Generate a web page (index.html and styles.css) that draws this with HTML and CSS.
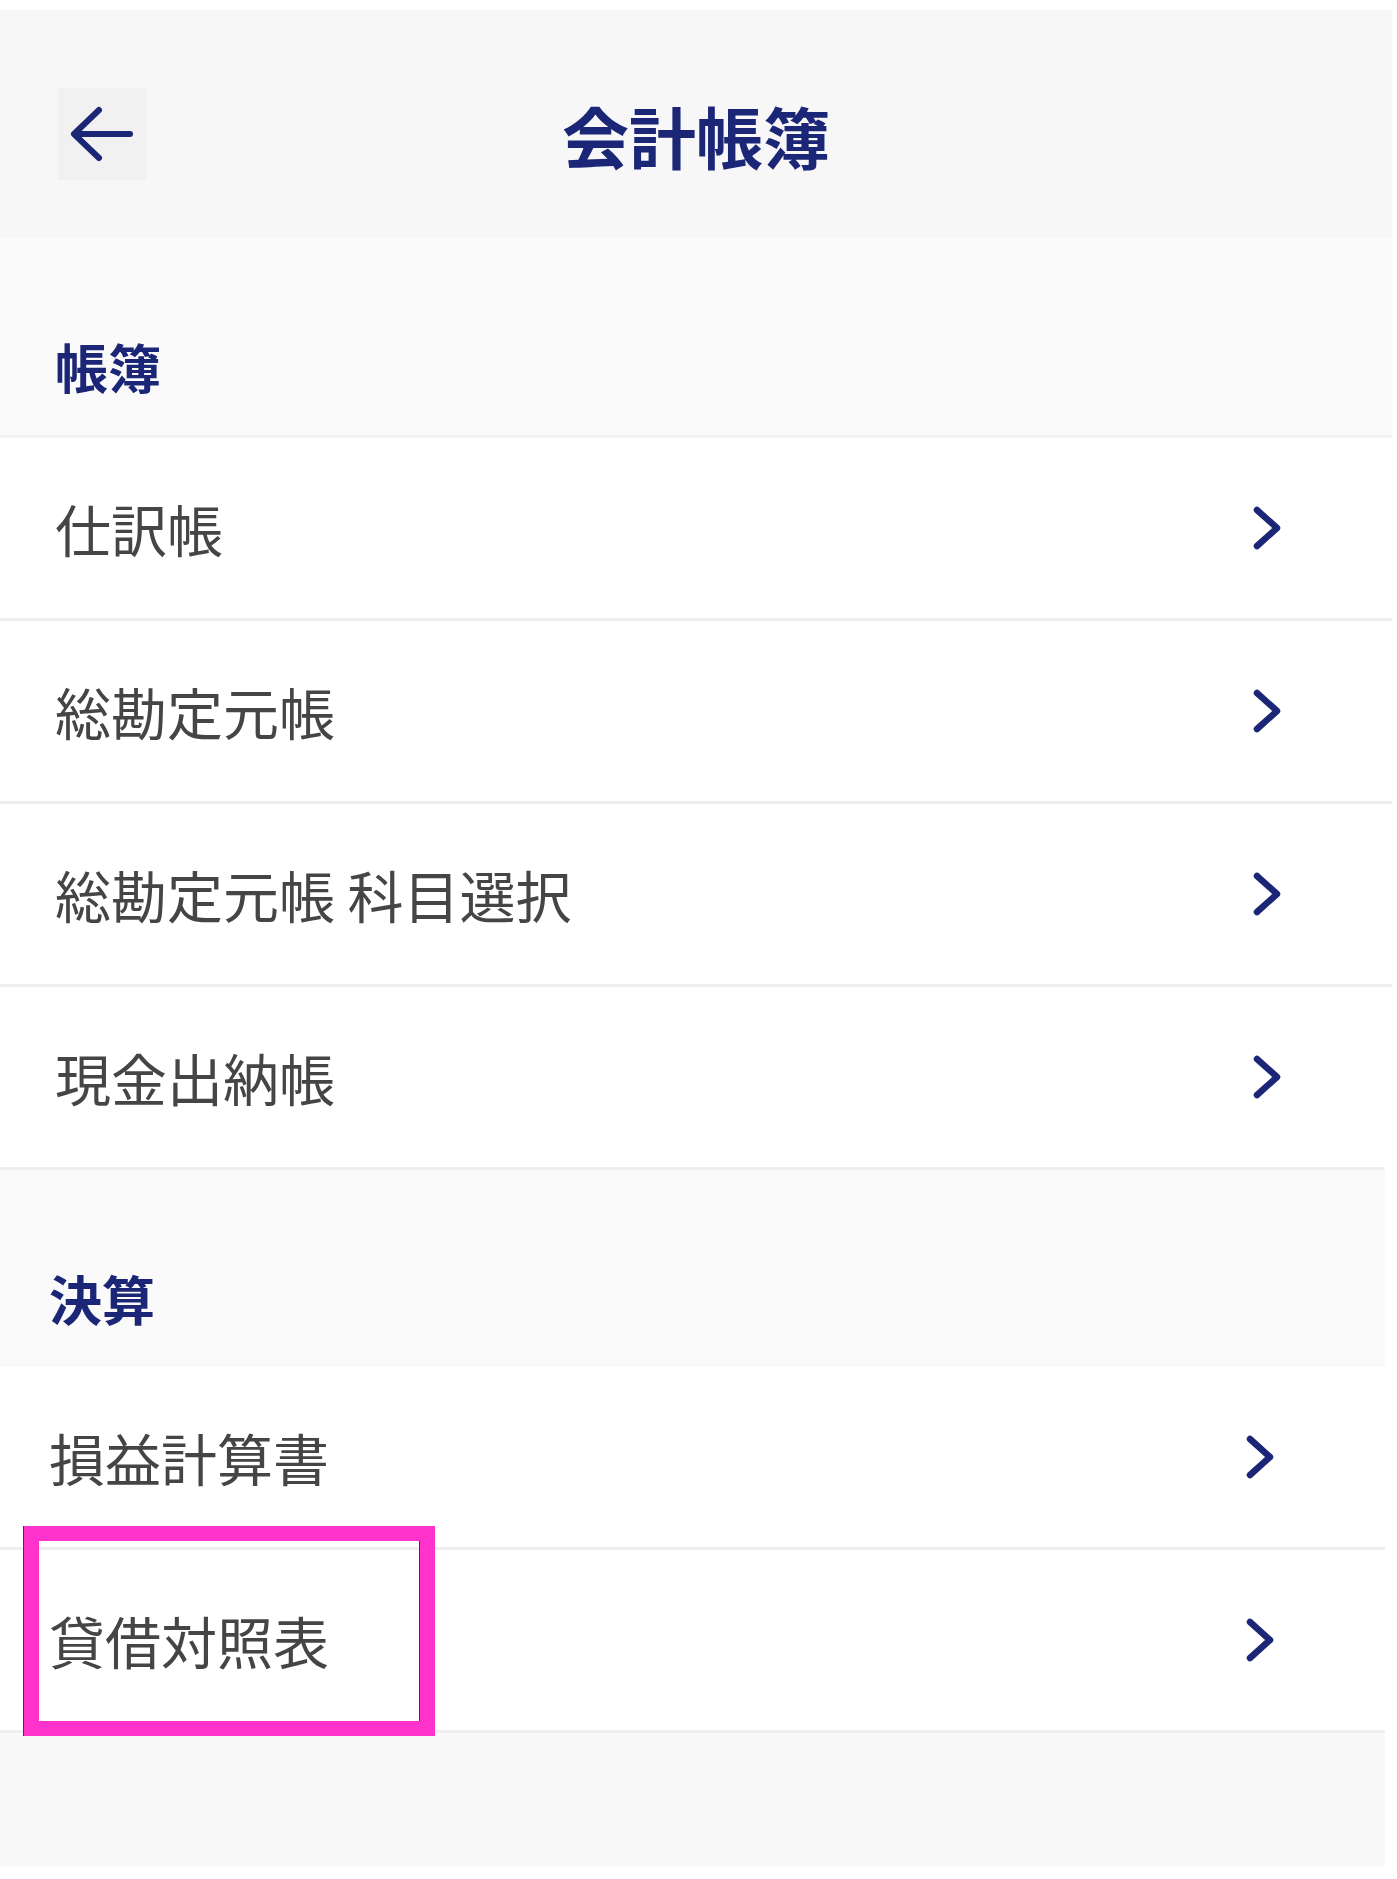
FILE: index.html
```html
<!DOCTYPE html>
<html lang="ja">
<head>
  <meta charset="UTF-8" />
  <meta name="viewport" content="width=device-width, initial-scale=1.0" />
  <title>会計帳簿</title>
  <link rel="stylesheet" href="styles.css">
</head>
<body>
  <div class="panel panel-top">
    <header class="app-header">
      <button class="back-btn" aria-label="戻る">
        <svg width="64" height="56" viewBox="0 0 64 56" fill="none" stroke="currentColor" stroke-width="6" stroke-linecap="round" stroke-linejoin="round">
          <path d="M4 28H60M29 4L4 28L29 52" />
        </svg>
      </button>
      <h1 class="app-title">会計帳簿</h1>
      <span></span>
    </header>

    <div class="section-label">帳簿</div>
    <ul class="menu">
      <li class="menu-item"><span>仕訳帳</span><svg class="chevron" width="28" height="44" viewBox="0 0 28 44"><path d="M4 4L24 22L4 40" /></svg></li>
      <li class="menu-item"><span>総勘定元帳</span><svg class="chevron" width="28" height="44" viewBox="0 0 28 44"><path d="M4 4L24 22L4 40" /></svg></li>
      <li class="menu-item"><span>総勘定元帳 科目選択</span><svg class="chevron" width="28" height="44" viewBox="0 0 28 44"><path d="M4 4L24 22L4 40" /></svg></li>
      <li class="menu-item"><span>現金出納帳</span><svg class="chevron" width="28" height="44" viewBox="0 0 28 44"><path d="M4 4L24 22L4 40" /></svg></li>
    </ul>
  </div>

  <div class="panel panel-bottom">
    <div class="section-label">決算</div>
    <ul class="menu">
      <li class="menu-item"><span>損益計算書</span><svg class="chevron" width="28" height="44" viewBox="0 0 28 44"><path d="M4 4L24 22L4 40" /></svg></li>
      <li class="menu-item is-marked">
        <span>貸借対照表</span><svg class="chevron" width="28" height="44" viewBox="0 0 28 44"><path d="M4 4L24 22L4 40" /></svg>
        <div class="highlight-box"></div>
      </li>
    </ul>
    <div class="panel-foot"></div>
  </div>
</body>
</html>
```

FILE: styles.css
```css
body {
  margin: 0;
  background: #fff;
  font-family: "Noto Sans CJK JP", "Noto Sans", sans-serif;
  color: #454545;
}
.panel {
  background: #fff;
}
.panel-top {
  width: 1392px;
  margin-top: 10px;
}
.panel-bottom {
  width: 1385px;
  border-top: 3px solid #efefef;
}
.app-header {
  display: grid;
  grid-template-columns: 1fr auto 1fr;
  align-items: center;
  height: 228px;
  padding-top: 20px;
  box-sizing: border-box;
  background: #f7f7f7;
}
.back-btn {
  justify-self: start;
  margin-left: 58px;
  width: 88px;
  height: 92px;
  padding: 0;
  border: none;
  background: #f1f1f1;
  color: #1c2677;
  display: flex;
  align-items: center;
  justify-content: center;
}
.app-title {
  margin: 0;
  font-size: 67px;
  line-height: 1;
  font-weight: bold;
  color: #1c2677;
}
.section-label {
  display: flex;
  align-items: flex-end;
  height: 200px;
  padding: 0 0 42px 55px;
  box-sizing: border-box;
  background: #fafafa;
  border-bottom: 3px solid #f2f2f2;
  font-size: 53px;
  line-height: 1;
  font-weight: bold;
  color: #1c2677;
}
.panel-bottom .section-label {
  height: 197px;
  padding-left: 49px;
  border-bottom: none;
}
.menu {
  list-style: none;
  margin: 0;
  padding: 0;
}
.menu-item {
  position: relative;
  display: flex;
  align-items: center;
  justify-content: space-between;
  height: 180px;
  padding: 0 111px 0 55px;
  background: #fff;
  border-bottom: 3px solid #efefef;
  font-size: 56px;
  line-height: 1;
}
.panel-top .menu-item:last-child {
  border-bottom: none;
}
.panel-bottom .menu-item {
  padding-left: 49px;
}
.chevron {
  fill: none;
  stroke: #1c2677;
  stroke-width: 6.5;
  stroke-linecap: round;
  stroke-linejoin: round;
}
.panel-foot {
  height: 134px;
  background: #f9f9f9;
}
.highlight-box {
  position: absolute;
  top: -24px;
  left: 24px;
  width: 411px;
  height: 210px;
  box-sizing: border-box;
  border: 15px solid #ff33cc;
  box-shadow: -1px 0 0 #3a3a3a, inset -1px 0 0 #3a3a3a;
}
```
